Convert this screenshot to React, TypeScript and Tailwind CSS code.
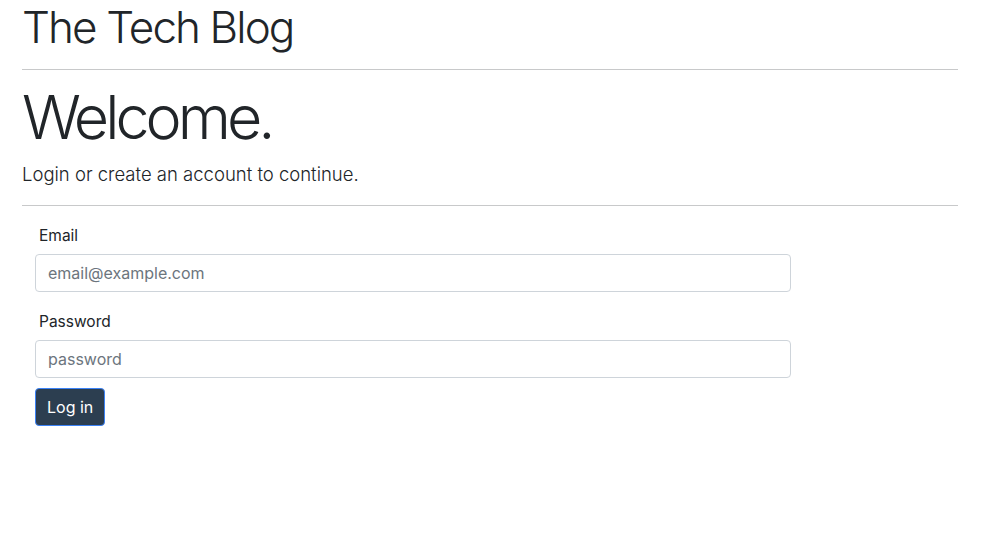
const fields = [
  { label: "Email", type: "email", placeholder: "email@example.com" },
  { label: "Password", type: "password", placeholder: "password" },
];

export default function App() {
  return (
    <div className="min-h-screen bg-white px-[22px] text-[#212529] font-['Inter','Liberation_Sans',sans-serif]">
      <header>
        <h1 className="pt-[1px] text-[44px] font-light leading-[1.2] tracking-[-1.9px]">
          The Tech Blog
        </h1>
        <hr className="mt-[15px] w-[936px] border-t border-[#c8c9ca]" />
      </header>

      <main>
        <h2 className="mt-[11px] text-[61px] font-light leading-[1.2] tracking-[-4px]">
          Welcome.
        </h2>
        <p className="mt-[7px] text-[18.5px] font-light leading-[1.5]">
          Login or create an account to continue.
        </p>
        <hr className="mt-[16px] w-[936px] border-t border-[#c8c9ca]" />

        <form className="px-[13px] pt-[18px]" onSubmit={(e) => e.preventDefault()}>
          <div className="flex flex-col gap-[18px]">
            {fields.map((f) => (
              <div key={f.label}>
                <label className="block px-[4px] text-[15.5px] leading-[24px] text-[#212529]">
                  {f.label}
                </label>
                <input
                  type={f.type}
                  placeholder={f.placeholder}
                  className="mt-[6px] block h-[38px] w-[756px] rounded-[4px] border border-[#ced4da] px-[12px] text-[16px] placeholder:text-[#6c757d]"
                />
              </div>
            ))}
          </div>
          <button
            type="submit"
            className="mt-[10px] h-[38px] rounded-[4px] border border-[#3b82f6] bg-[#2c3e50] px-[11px] text-[16px] text-white"
          >
            Log in
          </button>
        </form>
      </main>
    </div>
  );
}
